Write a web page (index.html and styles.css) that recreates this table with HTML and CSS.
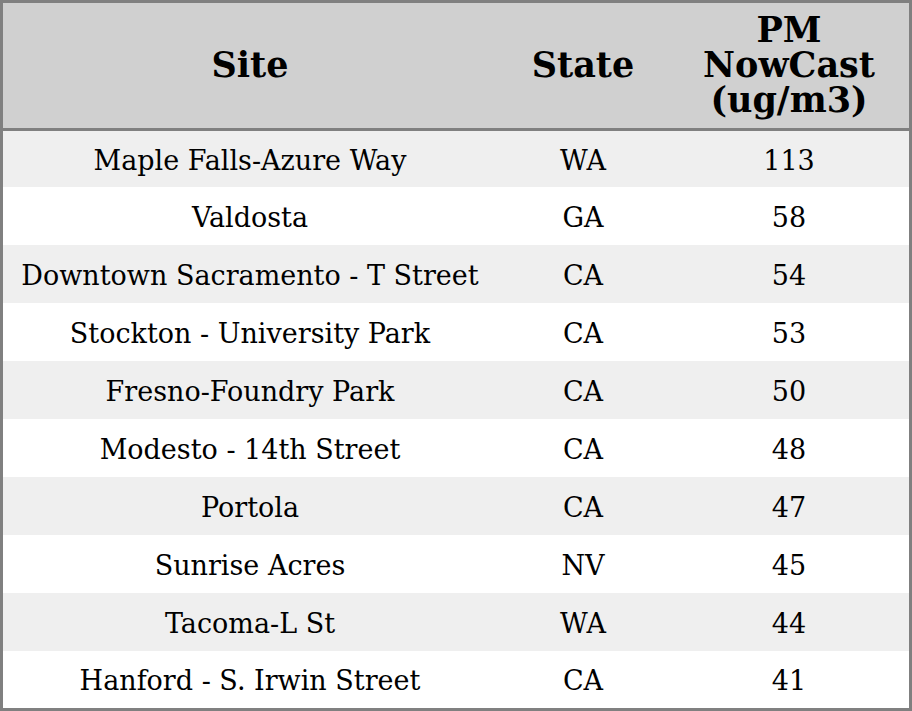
FILE: index.html
```html
<!DOCTYPE html>
<html>
<head>
<meta charset="utf-8">
<link rel="stylesheet" href="styles.css">
</head>
<body>
<table class="aq">
<colgroup><col class="c1"><col class="c2"><col class="c3"></colgroup>
<thead>
<tr><th>Site</th><th>State</th><th>PM<br>NowCast<br>(ug/m3)</th></tr>
</thead>
<tbody>
<tr class="odd first"><td>Maple Falls-Azure Way</td><td>WA</td><td>113</td></tr>
<tr><td>Valdosta</td><td>GA</td><td>58</td></tr>
<tr class="odd"><td>Downtown Sacramento - T Street</td><td>CA</td><td>54</td></tr>
<tr><td>Stockton - University Park</td><td>CA</td><td>53</td></tr>
<tr class="odd"><td>Fresno-Foundry Park</td><td>CA</td><td>50</td></tr>
<tr><td>Modesto - 14th Street</td><td>CA</td><td>48</td></tr>
<tr class="odd"><td>Portola</td><td>CA</td><td>47</td></tr>
<tr><td>Sunrise Acres</td><td>NV</td><td>45</td></tr>
<tr class="odd"><td>Tacoma-L St</td><td>WA</td><td>44</td></tr>
<tr class="last"><td>Hanford - S. Irwin Street</td><td>CA</td><td>41</td></tr>
</tbody>
</table>
</body>
</html>
```
FILE: styles.css
```css
html, body { margin: 0; padding: 0; background: #fff; }
.aq {
  width: 912px;
  height: 711px;
  border: 3px solid #808080;
  border-spacing: 0;
  border-collapse: separate;
  table-layout: fixed;
  font-family: "DejaVu Serif", serif;
  color: #000;
  box-sizing: border-box;
}
.c1 { width: 494px; }
.c2 { width: 172px; }
.c3 { width: 240px; }
.aq th {
  height: 122px;
  padding: 0 0 3px 0;
  background: #d0d0d0;
  border-bottom: 3px solid #808080;
  font-size: 35px;
  font-weight: bold;
  line-height: 35px;
  text-align: center;
  vertical-align: middle;
}
.aq td {
  height: 56px;
  padding: 2px 0 0 0;
  font-size: 27px;
  text-align: center;
  vertical-align: middle;
}
.aq tr.first td { height: 54px; }
.aq tr.last td { height: 55px; }
.aq tr.odd td { background: #efefef; }
```
